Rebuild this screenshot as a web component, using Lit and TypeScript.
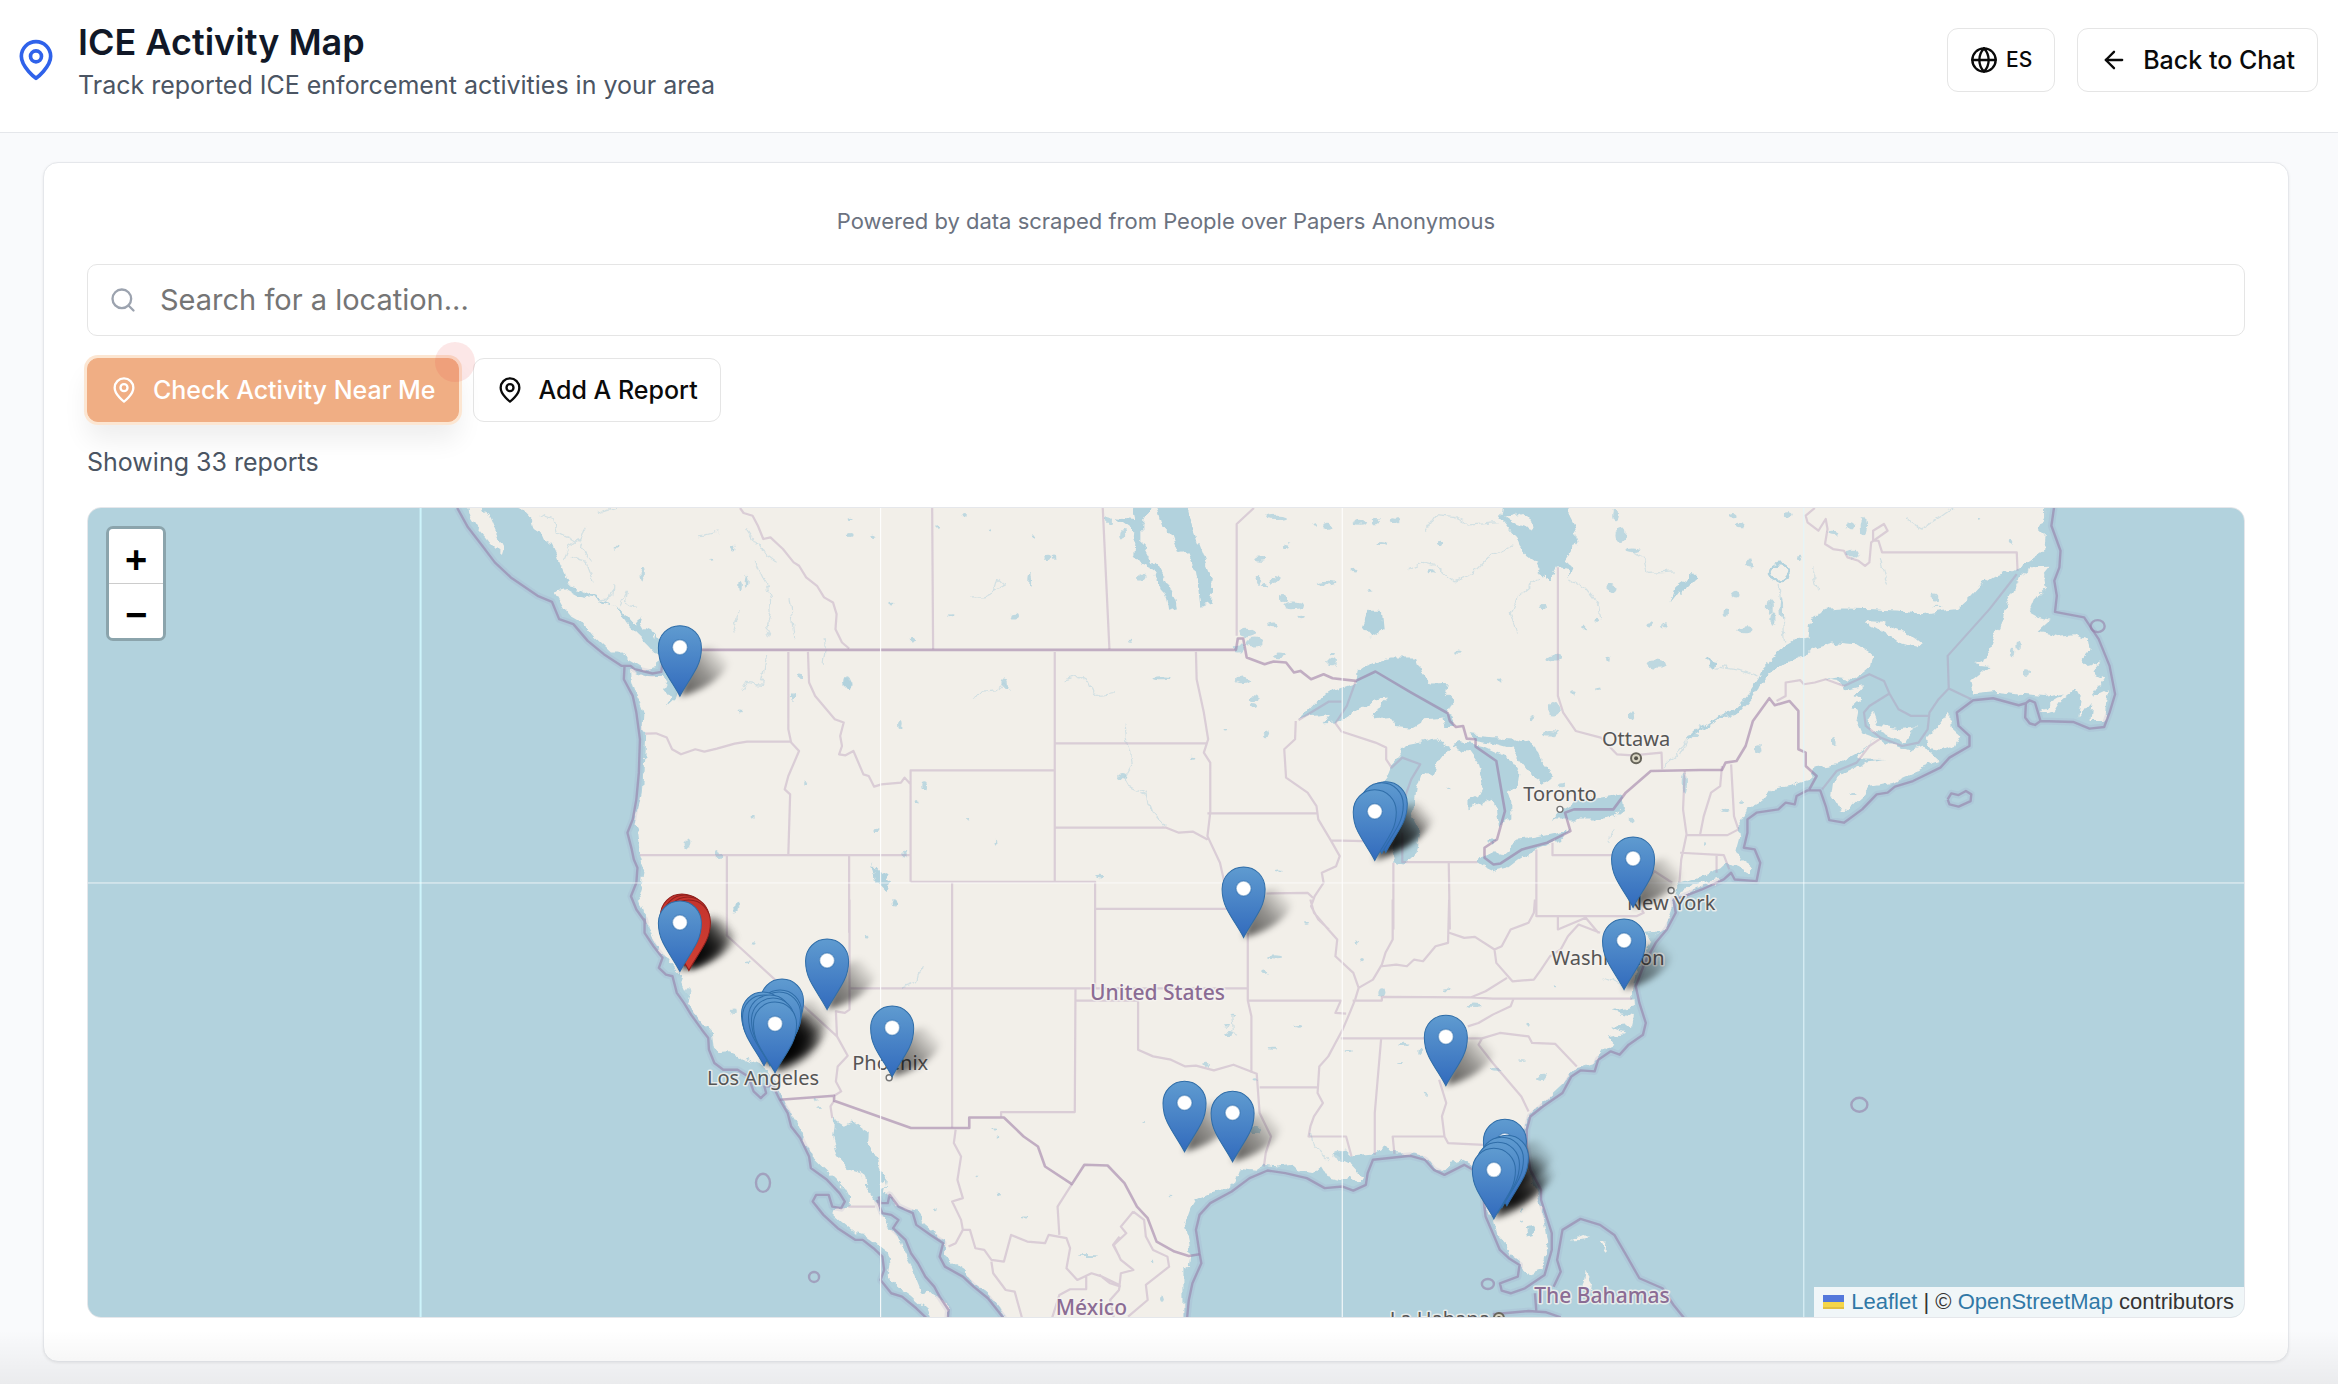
import { LitElement, html, css, svg } from "lit";
import { customElement, property, state } from "lit/decorators.js";

/* ---------- map geometry ---------- */

/* Survey sheets: origin on the map and units per map pixel. */
const SHEETS: Record<string, [number, number, number, number]> = {
  W: [80, 500, 2.8, 3],
  A: [600, 500, 2.8, 3],
  B: [1140, 500, 2.8, 3],
  C: [1680, 500, 2.751, 3],
  D: [560, 900, 2.8, 3],
  E: [1100, 900, 2.8, 3],
  F: [1640, 900, 2.246, 3],
};

/* "A 1 2 3 4 B 5 6" -> path data; a letter switches the sheet. */
function trace(data: string, close = false): string {
  let sheet = SHEETS.A;
  const out: string[] = [];
  let pending: number | null = null;
  for (const token of data.trim().split(/[\s,]+/)) {
    if (SHEETS[token]) {
      sheet = SHEETS[token];
    } else if (pending === null) {
      pending = Number(token);
    } else {
      const x = sheet[0] + pending / sheet[2];
      const y = sheet[1] + Number(token) / sheet[3];
      out.push(`${x.toFixed(1)} ${y.toFixed(1)}`);
      pending = null;
    }
  }
  return `M${out.join("L")}${close ? "Z" : ""}`;
}

const traceAll = (lines: string[], close = false) => lines.map((l) => trace(l, close)).join("");

const SEA = [
  "W 0 0 1220 0 1235 27 1270 65 1275 85 1290 95 1300 120 1325 130 1340 165 1348 190 1355 205 1362 235 1370 262 1400 270 1440 290 1480 308 1520 335 1540 370 1568 400 A 105 360 110 345 118 370 130 392 160 402 180 430 210 440 200 520 222 575 215 600 190 625 200 600 182 575 195 545 170 530 140 530 110 520 90 508 92 545 105 590 118 620 125 640 122 690 130 700 128 760 125 820 120 880 108 940 100 980 105 1000 110 1050 118 1090 125 1110 120 1160 112 1190 125 1230 138 1270 140 1290 D 240 60 255 90 270 130 290 160 310 190 330 215 345 230 340 245 350 270 365 290 360 310 380 340 400 370 425 395 430 440 450 460 480 458 520 475 560 495 590 520 610 550 620 575 630 605 645 630 665 665 680 700 695 735 712 775 740 805 775 840 800 870 812 895 810 920 780 925 765 940 790 965 830 1000 860 1005 890 1030 920 1055 925 1090 920 1130 950 1160 990 1190 1030 1230 1045 1270 W 0 2500",
  "D 770 655 800 675 820 665 845 685 870 700 868 735 885 770 900 810 920 840 915 880 940 905 970 930 1010 935 1015 965 1045 990 1050 1010 1080 1020 1080 1065 1100 1085 1135 1110 1160 1145 1200 1180 1230 1220 1260 1270 1095 1270 1090 1225 1060 1190 1035 1175 1015 1180 1000 1140 985 1100 965 1060 950 1015 925 980 900 940 880 900 860 860 840 820 810 810 780 770 765 710",
  "E 235 1270 235 1110 250 1100 255 1060 250 1020 240 970 255 925 270 900 310 880 350 870 380 845 395 805 440 810 460 795 500 800 540 795 560 815 600 820 620 800 640 835 680 845 700 830 720 855 735 830 700 790 650 765 690 755 705 770 760 765 795 740 810 760 860 762 900 770 925 785 940 810 965 815 985 790 1020 780 1045 795 1060 830 1075 870 1080 930 1100 960 1110 1000 1135 1030 1150 1065 1175 1085 1185 1115 1210 1120 1235 1110 1248 1080 1255 1030 1250 990 1235 920 1215 850 1195 800 1190 760 1185 700 1200 650 1225 620 1260 590 1300 550 1320 520 1350 500 1380 490 1400 460 1440 430 1425 410 1470 400 1425 382 1490 375 1495 350 1435 335 1492 320 1490 280 1500 240 1505 200 1490 160 1520 170 1540 130 1525 100 1568 95 F 30 115 55 90 65 55 75 15 B 1495 1200 1500 1170 C 0 1150 60 1130 110 1110 130 1090 150 1100 165 1105 190 1120 200 1100 170 1080 155 1050 165 1010 160 970 180 935 220 910 250 870 300 860 350 845 365 830 372 805 430 795 480 765 520 735 545 718 500 700 485 660 490 630 465 628 495 600 482 590 505 560 450 573 440 545 400 540 440 535 480 540 520 505 525 465 480 435 430 430 380 445 340 465 290 490 250 520 220 555 190 600 160 640 120 655 90 670 40 705 20 725 35 700 85 665 150 630 190 580 220 530 240 485 280 445 320 420 350 415 355 375 375 345 400 332 450 328 530 330 600 335 665 345 720 335 760 330 800 290 825 260 860 235 920 215 960 185 1000 155 1005 110 985 90 1000 60 1000 27 1000 0 1600 0 1600 2600 0 2600",
  "B 1020 0 1010 60 1050 115 1060 145 1085 175 1105 190 1120 225 1150 245 1170 205 1200 210 1203 235 1210 205 1190 190 1225 130 1215 80 1200 50 1200 0",
];

const LAKES = [
  "B 445 662 490 610 540 575 605 550 610 520 650 490 700 475 775 475 790 520 815 550 860 548 855 580 878 605 865 640 885 680 855 680 850 655 800 660 760 685 720 680 700 650 655 655 670 620 695 597 650 605 590 645 560 665 515 670 530 645 480 650",
  "B 870 745 830 720 790 730 740 740 725 780 700 810 685 850 725 880 720 1000 705 1060 710 1090 740 1095 775 1060 785 1000 765 940 775 870 790 820 822 830 830 800 850 770",
  "B 870 735 920 755 950 800 965 860 950 890 920 905 920 930 960 910 985 895 1000 930 1005 980 1040 960 1040 910 1030 880 1060 860 1065 820 1040 780 1010 765 960 740 900 728",
  "B 920 705 1000 712 1050 715 1100 735 1120 785 1155 830 1130 850 1090 820 1060 780 1040 750 990 735 940 725",
  "B 975 1020 1000 1020 985 1042",
  "B 945 1090 965 1065 1010 1065 1060 1020 1110 1015 1200 995 1180 1020 1110 1050 1060 1080 1030 1105 990 1115 960 1100",
  "B 1150 960 1180 930 1220 905 1290 895 1350 885 1355 930 1330 950 1280 960 1200 960",
  "B 40 0 130 0 150 90 185 190 205 240 200 310 170 320 165 270 155 200 140 160 110 165 90 110 65 80 55 40",
  "A 1490 10 1550 10 1520 70 1520 130 1550 190 B 20 170 50 200 70 240 100 300 105 330 80 338 75 300 55 250 20 190 A 1515 200 1495 170 1500 100 1440 55 1500 60",
  "B 640 335 675 335 680 390 650 412 625 380",
  "A 765 1095 790 1125 815 1118 800 1140 820 1155 800 1172 775 1145",
  "E 1195 985 1215 980 1215 1005 1200 1010",
  "A 690 540 700 545 700 570 688 565",
  "C 0 270 30 225 45 235 0 285",
  "B 1485 310 1500 260 1550 225 1555 240 1510 275",
  "D 450 470 500 465 520 485 470 500",
  "C 68 480 100 485 95 505 80 505",
  "A 160 405 100 410 60 350 75 345 100 375 150 400 165 440 155 440",
];

const ISLANDS = [
  "W 1085 15 1130 15 1150 60 1165 100 1190 150 1185 168 1150 130 1115 85 1095 50",
  "W 1335 280 1365 270 1400 290 1450 300 1500 320 1520 350 1545 385 1568 410 A 140 440 165 470 160 500 130 510 100 490 80 478 60 460 W 1490 460 1440 410 1410 370 1370 345",
  "C 505 365 545 368 600 390 640 410 668 435 650 445 600 430 560 400",
  "C 515 660 530 635 545 680 600 690 650 685 630 700 615 728 580 715 530 690",
  "C 545 718 590 740 630 755 670 740 690 765 710 785 670 800 640 820 590 845 550 855 520 860 500 890 470 920 445 940 430 915 415 890 420 850 450 820 510 790 570 782 480 780 500 755 520 735",
  "C 740 635 740 680 770 710 755 740 720 755 690 750 680 715 710 680",
  "C 1020 203 1000 230 1005 265 975 300 960 340 985 355 1015 365 985 395 1010 400 1040 410 1080 405 1120 420 1125 450 1100 480 1120 500 1155 490 1130 520 1165 540 1135 590 1175 570 1165 665 1125 665 1130 610 1095 655 1100 600 1085 570 1050 600 1030 635 990 645 1020 605 1060 580 1000 590 950 585 870 575 805 583 797 550 830 520 850 500 805 495 840 480 865 405 880 390 900 310 935 230 965 205",
  "C 0 1170 60 1150 110 1135 120 1140 60 1160 0 1187",
  "B 1020 50 1060 38 1095 65 1100 92 1060 78",
  "D 838 812 855 825 865 850 850 845",
  "D 900 845 915 835 918 858 905 865",
  "E 1350 1165 1360 1115 1380 1150 1378 1170",
  "E 1320 1022 1350 1008 1378 1015 1345 1020",
  "E 1400 1025 1418 1020 1415 1062 1408 1060 1412 1035",
];

/* Small lakes: sheet, then x y half-width half-height quadruples. */
const PONDS: Record<string, number[]> = {
  A: [700, 58, 6, 5, 703, 108, 7, 6, 768, 112, 7, 5, 950, 87, 6, 5, 1023, 53, 6, 5, 1095, 93, 4, 4, 1220, 111, 4, 5, 1257, 175, 8, 8, 1273, 171, 7, 5, 1160, 348, 12, 7, 985, 348, 8, 3, 821, 315, 6, 4, 878, 420, 6, 7, 377, 148, 5, 6, 316, 176, 8, 3, 54, 143, 7, 3, 120, 225, 6, 20, 395, 260, 5, 14, 412, 250, 4, 20, 565, 530, 9, 13, 695, 553, 9, 16, 842, 680, 5, 12, 910, 862, 8, 10, 893, 907, 4, 5, 1037, 955, 4, 5, 1108, 1030, 4, 9, 584, 848, 4, 6, 775, 990, 7, 8, 430, 955, 6, 5, 248, 1032, 8, 12, 336, 1068, 6, 10, 855, 1067, 6, 10, 383, 1225, 7, 14, 827, 1213, 8, 14, 1135, 555, 9, 14, 1487, 428, 7, 3, 397, 634, 6, 3, 1465, 832, 10, 8, 1400, 1130, 9, 4, 1428, 66, 7, 8, 1465, 110, 7, 14, 1520, 235, 9, 14, 1205, 245, 4, 20, 543, 590, 3, 12],
  B: [385, 52, 28, 8, 525, 82, 14, 8, 490, 72, 6, 5, 615, 68, 16, 6, 660, 68, 10, 8, 715, 65, 12, 10, 842, 130, 7, 8, 680, 138, 18, 6, 412, 138, 11, 6, 335, 180, 14, 8, 378, 240, 11, 9, 350, 258, 10, 6, 525, 255, 26, 7, 330, 245, 8, 16, 600, 210, 10, 4, 650, 275, 8, 3, 430, 320, 30, 10, 400, 300, 10, 12, 300, 400, 26, 14, 320, 430, 22, 12, 280, 445, 16, 12, 375, 380, 18, 7, 455, 358, 10, 5, 540, 490, 12, 8, 540, 465, 10, 5, 390, 470, 20, 7, 287, 542, 20, 10, 318, 600, 12, 9, 316, 620, 10, 6, 358, 702, 10, 9, 62, 540, 24, 6, 820, 215, 6, 5, 1128, 322, 6, 8, 1160, 475, 22, 9, 1445, 495, 30, 14, 1320, 270, 14, 12, 1380, 152, 18, 7, 1345, 105, 14, 24, 1330, 45, 8, 16, 1425, 380, 10, 8, 1470, 375, 8, 6, 1380, 650, 9, 10, 1150, 702, 22, 7, 1215, 578, 8, 5, 1160, 630, 18, 16, 1375, 965, 10, 4, 1310, 480, 5, 10, 1275, 365, 8, 6, 1245, 390, 7, 4, 1180, 858, 10, 9, 1098, 658, 6, 5, 1285, 570, 8, 5, 1525, 850, 6, 30, 1010, 542, 5, 5, 870, 870, 6, 5, 888, 462, 8, 5, 142, 775, 6, 3, 243, 688, 5, 3, 388, 1113, 12, 3, 1550, 710, 16, 7],
  C: [143, 47, 12, 8, 162, 75, 9, 10, 190, 190, 9, 12, 155, 288, 14, 10, 128, 345, 6, 14, 180, 390, 22, 12, 245, 320, 7, 24, 255, 360, 7, 20, 278, 330, 5, 30, 330, 175, 8, 8, 300, 45, 12, 8, 420, 100, 14, 8, 465, 85, 12, 12, 505, 80, 9, 26, 475, 165, 18, 10, 700, 295, 9, 12, 710, 322, 14, 2, 217, 750, 9, 12, 122, 930, 8, 5, 168, 910, 6, 4, 422, 728, 5, 12, 475, 882, 6, 5, 955, 520, 9, 10, 930, 440, 6, 16, 912, 460, 6, 14, 910, 130, 5, 4, 820, 55, 5, 4, 70, 1032, 4, 7],
  D: [545, 132, 5, 4, 528, 187, 6, 4, 488, 335, 10, 5, 865, 113, 7, 4, 940, 12, 7, 10, 497, 25, 8, 12, 720, 605, 5, 4, 727, 625, 7, 3, 1217, 692, 7, 3, 1228, 710, 5, 3, 1168, 828, 5, 4, 1230, 883, 6, 4, 1300, 953, 8, 3, 1480, 1068, 26, 3, 1052, 930, 5, 4, 360, 280, 8, 14],
  E: [360, 400, 14, 6, 355, 380, 10, 4, 488, 447, 9, 3, 555, 377, 12, 4, 465, 218, 7, 5, 490, 172, 24, 5, 722, 131, 6, 5, 740, 180, 5, 5, 578, 69, 8, 4, 1175, 487, 10, 2, 1238, 533, 16, 8, 1108, 510, 16, 6, 913, 580, 6, 5, 845, 490, 10, 3, 700, 457, 9, 3, 850, 437, 18, 5, 897, 455, 8, 8, 790, 280, 10, 14, 1045, 320, 18, 5, 1275, 260, 5, 3, 972, 272, 12, 3, 1200, 378, 3, 9, 437, 545, 9, 3, 435, 692, 12, 8, 300, 495, 9, 6, 175, 1198, 5, 8, 670, 770, 18, 14, 1180, 930, 5, 5, 1180, 965, 5, 3, 375, 345, 4, 3, 124, 670, 4, 3, 203, 887, 7, 2, 146, 1083, 5, 4],
};

const RIVERS = [
  "A 1045 293 1080 293 1105 280 1115 240 1135 260 1100 280",
  "A 1300 542 1340 532 1370 550 1380 575 1400 585 1440 580",
  "A 1472 670 1475 720 1485 760 1490 800 1470 840 1480 860 1530 885 1540 930 1568 965",
  "A 1050 595 1060 580 1110 575 1135 555 1148 582",
  "A 400 575 415 550 455 555 465 510 472 470",
  "A 410 85 450 150 500 190",
  "A 440 190 460 240 480 290 482 340 468 390 480 415",
  "A 532 300 538 350 548 420",
  "A 392 330 388 370 375 380 382 400",
  "A 275 110 300 108 335 98",
  "A 0 300 30 295 40 255",
  "A 60 320 80 275 75 310 90 320 110 325",
  "A 630 420 635 450 630 500",
  "A 0 40 60 20",
  "B 0 885 20 895 35 940 75 980",
  "B 750 210 790 190 830 200 880 248 930 225 970 180 1040 140",
  "B 800 100 830 50 880 55 920 75 1000 68",
  "B 1115 240 1060 290 1040 340 1060 400",
  "B 1205 240 1250 270 1285 320 1290 360",
  "B 1380 160 1410 180 1420 220 1500 215",
  "B 1465 800 1500 770 1530 720 1568 680",
  "B 1315 1030 1325 990",
  "C 100 500 160 510 215 530",
  "C 272 255 275 300 285 380 290 430",
  "C 240 300 255 350 260 380",
  "C 0 770 20 725",
  "C 370 200 370 240 380 275",
  "C 550 180 560 225 570 250",
  "C 620 60 660 90 720 50 750 27",
  "D 1020 200 1005 225 1000 250 960 265",
  "E 370 345 375 400 390 410",
  "E 590 700 600 740 640 780",
  "E 1410 235 1465 260",
  "W 1418 80 1405 120 1375 140 1360 180",
  "W 1380 180 1420 190 1440 245",
  "W 1460 310 1495 290 1498 255",
  "W 1290 45 1330 60 1340 100 1400 130 1435 185",
];

const STATE_LINES = [
  "A 530 458 530 690 538 730 560 755 530 830 520 870 535 885 530 1065",
  "A 130 703 160 702 190 715 205 750 230 765 270 750 295 757 330 748 380 733 415 727 538 727",
  "A 585 458 588 550 605 590 660 660 685 670 675 710 680 740 672 765 690 768 712 755 740 825 755 830 770 862 790 855 845 850 855 835 872 855",
  "A 872 1147 872 813 1275 813",
  "A 872 1147 1388 1147 1388 1290",
  "A 115 1067 872 1067",
  "A 358 1067 358 1300",
  "A 700 1067 700 1300",
  "A 988 1150 988 1300",
  "A 1275 458 1275 1147",
  "A 1388 1228 1568 1228",
  "A 1275 732 1568 732",
  "A 1275 985 1568 985",
  "A 932 0 935 450",
  "A 1408 0 1428 450",
  "A 395 27 405 42 430 50 445 80 460 120 480 115 515 150 545 190 560 200 580 235 610 260 630 295 655 310 665 345 662 390 680 430 700 448",
  "B 0 732 190 732",
  "B 158 458 160 540 180 640 192 720 180 760 198 790 198 940 190 1010 225 1090 240 1160",
  "B 0 985 75 985 110 1000 150 997 190 1020",
  "B 190 942 497 942",
  "B 437 665 435 720 405 750 410 835 470 880 495 920 500 960 535 1023 628 1025",
  "B 535 1023 560 1070 550 1100 510 1120 515 1150 490 1190 480 1220 500 1260 530 1290",
  "B 355 1182 470 1180 485 1195",
  "B 0 1228 240 1228",
  "B 445 662 530 607 565 607",
  "B 605 545 580 620 548 672 565 697 660 730 690 745 690 780 705 805 735 775 785 795 760 840 740 900",
  "B 710 1090 710 1290",
  "B 865 1090 868 1290",
  "B 735 1000 735 1088 945 1088",
  "B 272 410 272 75 320 27",
  "B 1170 205 1170 590 1185 640 1220 695 1290 715 1335 765 1380 768 1460 760 1462 810",
  "B 1110 1050 1110 1250 1390 1250 1410 1240 1385 1200 1440 1115 1490 1150",
  "B 1155 1030 1155 1067 1410 1067",
  "B 1525 815 1520 930 1530 1005 1515 1080 1510 1150",
  "C 20 1007 130 1007 160 990",
  "C 115 800 110 860 85 880 65 950 55 1005",
  "C 140 795 148 950 160 990",
  "C 0 1060 120 1067 135 1110",
  "C 100 1067 100 1120",
  "C 370 27 345 50 350 70 380 95 400 60 405 90 398 135 420 150 450 155 460 175 490 185 508 200 520 190 525 130 570 95 560 75 530 95 530 125 545 125 555 160 925 160 927 215",
  "C 265 605 290 590 290 550 330 543 340 555 370 550 400 540 450 560",
  "D 470 0 470 108 778 410 808 468 780 500 775 545 790 575 770 588",
  "D 813 0 813 330 800 340 775 335 778 410",
  "D 813 266 1500 266 1568 266",
  "D 1100 0 1100 683",
  "D 1500 0 1500 266",
  "D 1500 28 1568 28",
  "D 1445 266 1443 637 1237 637 1237 650",
  "D 1445 303 E 108 303 108 450 150 470 200 480 240 500 270 498 320 512 375 495 440 522 448 640 480 710 465 760 460 800",
  "E 0 28 370 28",
  "E 415 100 415 303 425 350 425 520",
  "E 0 266 415 266",
  "E 415 303 675 303 660 340 690 342",
  "E 448 563 610 563",
  "E 590 0 600 40 640 90 665 120 660 170 710 220 725 265 715 300 700 340 680 390 660 430 640 470 615 500 610 580 625 610 600 650 590 680 585 710 690 710 705 770",
  "E 820 0 820 120 800 160 790 195 765 240 725 265",
  "E 790 200 830 195 860 200 880 180 905 185 940 140 975 130 978 0",
  "E 978 100 1020 115 1050 112 1105 150 1125 140 1150 90 1200 70 1215 40 1218 0",
  "E 1105 150 1110 190 1155 245 1215 240 1235 210 1260 170 1290 150 1310 110 1340 75 1400 100",
  "E 1282 50 1282 90 1360 55 1395 100",
  "E 1140 235 1080 275 1040 293",
  "E 708 303 790 303 790 292 1040 293 1100 297 1490 297",
  "E 1158 297 1150 320 1100 345 1060 370 1030 380",
  "E 675 416 910 416",
  "E 1030 416 1070 416 1120 400 1200 410 1210 430 1275 433 1335 500",
  "E 788 416 770 640 770 765",
  "E 950 540 970 610 958 650 965 710 820 710 825 762",
  "E 965 710 975 730 1075 735",
  "E 1070 416 1060 435 1100 490 1140 540 1180 590 1200 635",
  "D 1110 690 1105 730 1125 770 1115 840 1130 895 1100 905 1125 960 1130 990 1110 1030 1090 1040",
  "D 1130 990 1150 990 1165 1045 1190 1050 1210 1080 1245 1085 1265 1005 1310 1025 1360 1030 1370 1005 1420 1015 1430 1045 1420 1105 1450 1140 1490 1120 1520 1130 1568 1155",
  "D 1435 853 1395 920 1400 1005",
  "D 1210 1085 1215 1120 1250 1170 1275 1175 1295 1252",
  "D 1380 1252 1400 1185 1430 1168 1475 1168 1475 1130",
  "D 1568 1010 1550 1035 1568 1070",
  "D 770 603 760 620 765 655",
  "D 810 920 885 920",
  "E 95 935 60 980 75 1000 40 1035 60 1080 95 1110 60 1120 55 1170 30 1200 40 1252",
  "E 95 935 125 960 130 1010 150 1050 190 1070 195 1100 130 1155 135 1200 80 1250",
  "E 0 1125 30 1150 60 1160",
];

const SEA_LINES = [
  "C 925 225 900 260 850 330 735 470 738 568 800 600",
  "C 738 568 710 600 685 640 680 690 655 730 610 740 550 715 510 680 505 640 520 620 575 583",
  "C 450 560 520 525 560 545 575 583 600 630 635 650 685 650",
  "C 390 870 430 815 485 790 520 740 550 718",
];

const NATIONAL = [
  "A 200 452 1568 452 B 270 452 275 418 290 418 300 475 350 495 375 487 410 490 432 520 450 515 480 540 515 525 540 537 605 545 660 517 760 580 862 642 868 665 885 683 905 680 915 718 940 720 940 742 998 785 1022 935 1000 1020 965 1045 965 1075 990 1095 1010 1092 1070 1050 1140 1030 1205 995 1190 940 1215 930 1325 930 1360 880 1430 815 1568 812 C 115 812 125 790 155 785 180 740 200 665 245 597 260 618 300 605 325 635 325 750 345 760 345 800 375 830 355 870",
  "D 618 600 770 588 770 603 985 685 1148 685 1148 653 1245 653 1300 710 1340 740 1360 800 1435 853 1470 795 1535 797 E 70 850 105 920 135 955 160 1025 210 1055 250 1068 280 1063",
];

const MARITIME = [
  "W 1060 27 1090 85 1130 140 1165 190 1210 235 1285 290 1325 308 1345 360 1385 375 1425 425 1470 465 1520 500 1545 500 A 100 510 150 523 175 518 180 470",
  "A 72 500 70 540 95 590 105 640 115 720 112 820 105 900 95 960 80 1000 92 1050 98 1080 108 1105 105 1150 90 1190 105 1230 125 1260 130 1270 D 240 60 240 100 265 140 290 175 280 205 300 225 318 230 330 280 350 310 370 345 400 390 418 415 420 450 435 490 460 510 500 510 530 530 545 575 565 595 580 580 575 560 600 560 618 600 640 640 650 680 675 715 700 770 705 805 750 840 785 880 800 905 790 925 765 920 755 885 720 885 710 905 740 945 780 985 830 1020 850 1020 880 1045 905 1070 910 1110 900 1140 930 1180 960 1190 1000 1225 1030 1256",
  "D 895 890 900 910 920 910 925 885 950 920 990 940 1000 975 1040 1005 1075 1030 1065 1070 1080 1100 1130 1130 1160 1160 1200 1195 1230 1235 1245 1256",
  "D 890 900 905 940 930 945 950 960 935 985 970 1020 985 1060 1005 1090 1025 1130 1050 1160 1065 1190 1090 1230 1088 1256",
  "E 245 1256 250 1200 260 1150 285 1090 280 1060 270 990 280 945 310 910 370 875 420 835 470 812 520 820 580 835 630 865 680 860 710 872 745 855 750 820 765 780 870 768 910 780 935 810 965 825 1020 795 1045 810 1070 860 1080 950 1100 1000 1120 1050 1145 1075 1175 1095 1170 1130 1120 1150 1125 1172 1150 1180 1190 1165 1245 1125 1265 1050 1265 1000 1235 900 1235 870 1205 810 1195 740 1195 690 1205 650 1240 620 1295 580 1320 530 1345 512 1385 515 1395 480 1430 455 1455 465 1480 435 1520 405 1528 370 1510 310 1500 260 1525 190 F 35 130 60 90 80 40 75 0 C 0 1195 60 1170 120 1140 140 1120 150 1140 210 1145 220 1090 205 1050 175 1045 185 1000 185 960 210 940 270 930 290 910 315 915 320 890 350 873 385 873 400 920 410 962 450 970 500 930 540 885 570 880 590 862 640 845 715 805 740 775 795 740 795 710 765 680 760 640 805 603 860 597 930 618 950 612 960 603 975 610 990 665 1080 668 1125 688 1165 683 1180 640 1195 585 1180 500 1150 420 1110 355 1030 338 1035 290 1028 245 1042 205 1045 155 1020 80 1028 20",
  "C 950 612 948 655 960 672 975 677 990 665",
  "C 735 900 745 882 765 887 785 875 800 885 798 905 765 922 740 915 735 900",
  "E 1270 1160 1290 1115 1280 1080 1295 990 1345 957 1400 975 1440 1005 1470 1060 1510 1135 F 50 1165 75 1215 100 1256",
  "E 1100 1243 1200 1233 1250 1237 1290 1252",
  "E 1218 1180 1222 1235",
];

const RINGS = [
  [2097, 627, 7, 6],
  [764, 1183, 7, 9],
  [815, 1277, 5, 5],
  [1488, 1284, 6, 5],
  [1859, 1105, 8, 7],
];

const SEAMS = [
  [421, 2, "#cdf4fb"],
  [881, 1, "#ffffff"],
  [1342, 1, "#ffffff"],
  [1803, 1, "#e2f6fb"],
] as const;

interface Place {
  name: string;
  x: number;
  y: number;
  country?: boolean;
  dot?: [number, number];
  capital?: boolean;
}

const PLACES: Place[] = [
  { name: "Ottawa", x: 1636, y: 747, dot: [1636, 759], capital: true },
  { name: "Toronto", x: 1560, y: 802, dot: [1560, 810] },
  { name: "New York", x: 1671, y: 911, dot: [1671, 891] },
  { name: "Washington", x: 1608, y: 965 },
  { name: "Los Angeles", x: 764, y: 1085 },
  { name: "Phoenix", x: 891, y: 1070, dot: [890, 1078] },
  { name: "United States", x: 1158, y: 1000, country: true },
  { name: "México", x: 1092, y: 1315, country: true },
  { name: "The Bahamas", x: 1602, y: 1303, country: true },
  { name: "La Habana", x: 1440, y: 1326, dot: [1499, 1318], capital: true },
];

interface Report {
  x: number;
  y: number;
  recent?: boolean;
}

const REPORTS: Report[] = [
  { x: 681, y: 697 },
  { x: 1386, y: 853 },
  { x: 1382, y: 854 },
  { x: 1375, y: 861 },
  { x: 1633, y: 908 },
  { x: 1244, y: 938 },
  { x: 683, y: 965, recent: true },
  { x: 686, y: 966, recent: true },
  { x: 689, y: 968, recent: true },
  { x: 690, y: 971, recent: true },
  { x: 681, y: 972 },
  { x: 1624, y: 990 },
  { x: 828, y: 1010 },
  { x: 783, y: 1050 },
  { x: 781, y: 1061 },
  { x: 780, y: 1063 },
  { x: 764, y: 1063 },
  { x: 765, y: 1066 },
  { x: 771, y: 1066 },
  { x: 774, y: 1069 },
  { x: 776, y: 1073 },
  { x: 893, y: 1077 },
  { x: 1446, y: 1086 },
  { x: 1185, y: 1152 },
  { x: 1233, y: 1162 },
  { x: 1505, y: 1190 },
  { x: 1507, y: 1206 },
  { x: 1502, y: 1208 },
  { x: 1498, y: 1213 },
  { x: 1494, y: 1219 },
];

const ponds = Object.entries(PONDS).flatMap(([key, list]) => {
  const [ox, oy, sx, sy] = SHEETS[key];
  const out: number[][] = [];
  for (let i = 0; i < list.length; i += 4) {
    out.push([ox + list[i] / sx, oy + list[i + 1] / sy, list[i + 2] / sx, list[i + 3] / sy]);
  }
  return out;
});

/* ---------- icons ---------- */

const mapPin = svg`<path d="M20 10c0 6-8 12-8 12s-8-6-8-12a8 8 0 0 1 16 0Z"/><circle cx="12" cy="10" r="3"/>`;
const globe = svg`<circle cx="12" cy="12" r="10"/><path d="M12 2a14.5 14.5 0 0 0 0 20 14.5 14.5 0 0 0 0-20"/><path d="M2 12h20"/>`;
const arrowLeft = svg`<path d="m12 19-7-7 7-7"/><path d="M19 12H5"/>`;
const search = svg`<circle cx="11" cy="11" r="8"/><path d="m21 21-4.3-4.3"/>`;

const icon = (shape: unknown, cls = "") =>
  html`<svg class="icon ${cls}" viewBox="0 0 24 24" aria-hidden="true">${shape}</svg>`;

/* ---------- map ---------- */

@customElement("activity-map")
export class ActivityMap extends LitElement {
  @property({ attribute: false }) reports: Report[] = [];

  static styles = css`
    :host {
      display: block;
      position: relative;
      overflow: hidden;
      border: 1px solid #e5e7eb;
      border-radius: 14px;
      background: #f2efe9;
      box-sizing: border-box;
    }
    .canvas {
      position: absolute;
      inset: 0;
      width: 100%;
      height: 100%;
      display: block;
    }
    .water {
      fill: #b2d2dd;
    }
    .land {
      fill: #f2efe9;
    }
    .river {
      fill: none;
      stroke: #b2d2dd;
      stroke-width: 1.2;
      opacity: 0.5;
    }
    .line {
      fill: none;
      stroke-linejoin: round;
    }
    .state-line {
      stroke: #b08fb5;
      stroke-width: 2.2;
      opacity: 0.36;
    }
    .national {
      stroke: #94719f;
      stroke-width: 2.6;
      opacity: 0.52;
    }
    .zone {
      stroke: #9a9cc4;
      stroke-width: 7;
      opacity: 0.16;
    }
    .maritime {
      stroke: #947ba6;
      stroke-width: 2.4;
      opacity: 0.56;
    }
    .place {
      font: 400 20px "Noto Sans", sans-serif;
      text-anchor: middle;
      fill: #555;
      stroke: #f6f4f0;
      stroke-width: 3;
      stroke-opacity: 0.8;
      stroke-linejoin: round;
      paint-order: stroke;
    }
    .country {
      fill: #8b6c94;
      font-size: 21px;
      font-weight: 500;
    }
    .dot {
      fill: #fff;
      stroke: #777;
      stroke-width: 1.4;
    }
    .capital {
      fill: #d9d5c3;
      stroke: #66645a;
      stroke-width: 2;
    }
    .zoom {
      position: absolute;
      left: 18px;
      top: 18px;
      width: 60px;
      box-sizing: border-box;
      border: 3px solid rgba(0, 0, 0, 0.22);
      border-radius: 7px;
      background-clip: padding-box;
      display: flex;
      flex-direction: column;
      overflow: hidden;
    }
    .zoom button {
      box-sizing: border-box;
      height: 54px;
      padding: 8px 0 0;
      border: 0;
      background: #fff;
      color: #000;
      font: 700 38px/46px "Liberation Sans", Arial, sans-serif;
    }
    .zoom button + button {
      height: 55px;
      border-top: 1px solid #ccc;
    }
    .credit {
      position: absolute;
      right: 0;
      bottom: 0;
      display: flex;
      align-items: center;
      gap: 7px;
      height: 30px;
      padding: 0 10px 0 9px;
      background: rgba(255, 255, 255, 0.8);
      color: #333;
      font: 400 22px/30px "Liberation Sans", Arial, sans-serif;
      white-space: pre;
    }
    .credit a {
      color: #3078a6;
      text-decoration: none;
    }
    .flag {
      width: 21px;
      height: 14px;
    }
  `;

  private marker(r: Report) {
    const fill = r.recent ? "url(#pin-red)" : "url(#pin-blue)";
    const edge = r.recent ? "#8f201d" : "#2f6da8";
    return svg`<g transform="translate(${r.x} ${r.y})">
      <path d="M0 0C-4-8-12-19-17-29-20-35-21.500-41-21.500-48.500-21.500-61-12-70.500 0-70.500S21.500-61 21.500-48.500C21.500-41 20-35 17-29 12-19 4-8 0 0Z" fill=${fill} stroke=${edge} stroke-width="1"/>
      <circle cx="0" cy="-49" r="7.500" fill="#fff" stroke=${edge} stroke-opacity=".45" stroke-width="1.500"/>
    </g>`;
  }

  render() {
    return html`
      <svg class="canvas" viewBox="88 509 2157 808" preserveAspectRatio="xMidYMid slice" role="img" aria-label="Map of reports">
        <defs>
          <linearGradient id="pin-blue" x1="0" y1="0" x2="0" y2="1">
            <stop offset="0" stop-color="#5f9bd0" />
            <stop offset="1" stop-color="#326bbd" />
          </linearGradient>
          <linearGradient id="pin-red" x1="0" y1="0" x2="0" y2="1">
            <stop offset="0" stop-color="#c5342d" />
            <stop offset="1" stop-color="#cf4034" />
          </linearGradient>
          <linearGradient id="shade" gradientUnits="userSpaceOnUse" x1="0" y1="0" x2="46" y2="-40">
            <stop offset="0" stop-color="#000" stop-opacity=".65" />
            <stop offset=".55" stop-color="#000" stop-opacity=".38" />
            <stop offset="1" stop-color="#000" stop-opacity="0" />
          </linearGradient>
          <filter id="soft" x="-30%" y="-30%" width="160%" height="160%">
            <feGaussianBlur stdDeviation="3" />
          </filter>
          <filter id="rough" x="0" y="0" width="100%" height="100%">
            <feTurbulence type="fractalNoise" baseFrequency="0.09" numOctaves="3" seed="4" />
            <feDisplacementMap in="SourceGraphic" scale="9" xChannelSelector="R" yChannelSelector="G" />
          </filter>
        </defs>

        <g filter="url(#rough)">
          <path class="water" d=${traceAll([...SEA, ...LAKES], true)} />
          <path class="land" d=${traceAll(ISLANDS, true)} />
          <path class="river" d=${traceAll(RIVERS)} />
          ${ponds.map(([x, y, rx, ry]) => svg`<ellipse class="water" cx=${x} cy=${y} rx=${rx} ry=${ry} opacity=".8"/>`)}
          <ellipse cx="1779" cy="574" rx="9" ry="8" fill="none" stroke="#b2d2dd" stroke-width="3" />
        </g>

        <path class="line state-line" d=${traceAll(STATE_LINES)} />
        <path class="line state-line" d=${traceAll(SEA_LINES)} />
        <path class="line national" d=${traceAll(NATIONAL)} />
        <path class="line zone" d=${traceAll(MARITIME)} />
        <path class="line maritime" d=${traceAll(MARITIME)} />
        ${RINGS.map(([x, y, rx, ry]) => svg`<ellipse class="line maritime" cx=${x} cy=${y} rx=${rx} ry=${ry}/>`)}

        ${PLACES.map(
          (p) => svg`
            ${p.dot ? svg`<circle class="dot ${p.capital ? "capital" : ""}" cx=${p.dot[0]} cy=${p.dot[1]} r=${p.capital ? 5 : 3}/>` : ""}
            ${p.dot && p.capital ? svg`<circle cx=${p.dot[0]} cy=${p.dot[1]} r="2" fill="#55534a"/>` : ""}
            <text class="place ${p.country ? "country" : ""}" x=${p.x} y=${p.y}>${p.name}</text>`
        )}

        ${SEAMS.map(([x, w, c]) => svg`<rect x=${x} y="500" width=${w} height="830" fill=${c}/>`)}
        <rect x="80" y="883" width="2180" height="1" fill="#fff" opacity=".75" />

        ${this.reports.map(
          (r) => svg`<path transform="translate(${r.x} ${r.y})" filter="url(#soft)" fill="url(#shade)" d="M0 0L10-34Q24-56 42-48 56-38 42-22 26-6 0 0Z"/>`
        )}
        ${this.reports.map((r) => this.marker(r))}
      </svg>

      <div class="zoom">
        <button type="button" aria-label="Zoom in">+</button>
        <button type="button" aria-label="Zoom out">−</button>
      </div>
      <div class="credit">
        <svg class="flag" viewBox="0 0 21 14" aria-hidden="true">
          <path fill="#5478db" d="M0 0h21v7H0z" />
          <path fill="#f5d649" d="M0 7h21v7H0z" />
          <path fill="#e3bf3f" d="M0 12h21v2H0z" />
        </svg><span><a href="#leaflet">Leaflet</a> | © <a href="#osm">OpenStreetMap</a> contributors</span>
      </div>
    `;
  }
}

/* ---------- page ---------- */

@customElement("app-root")
export class AppRoot extends LitElement {
  @state() private total = 33;

  static styles = css`
    :host {
      display: flex;
      flex-direction: column;
      min-height: 100vh;
      position: relative;
      background: #f9fafc;
      color: #0a0a0a;
      font-family: Inter, sans-serif;
      font-size: 25px;
      line-height: 36px;
    }
    * {
      box-sizing: border-box;
    }
    .icon {
      width: 28px;
      height: 28px;
      flex: none;
      fill: none;
      stroke: currentColor;
      stroke-width: 2;
      stroke-linecap: round;
      stroke-linejoin: round;
    }
    .header {
      display: flex;
      align-items: center;
      justify-content: space-between;
      height: 133px;
      padding: 0 20px 12px 14px;
      background: #fff;
      border-bottom: 1px solid #e5e7eb;
    }
    .brand {
      display: flex;
      align-items: center;
      gap: 20px;
    }
    .brand .icon {
      width: 44px;
      height: 44px;
      color: #2f62ea;
    }
    .names {
      display: flex;
      flex-direction: column;
      gap: 3px;
      padding-top: 3px;
    }
    .title {
      margin: 0;
      font-size: 36px;
      line-height: 44px;
      font-weight: 600;
      color: #111827;
    }
    .subtitle {
      margin: 0;
      color: #4b5563;
    }
    .actions {
      display: flex;
      gap: 22px;
    }
    .btn {
      display: inline-flex;
      align-items: center;
      height: 64px;
      padding: 0 22px;
      gap: 15px;
      border: 1px solid #e5e5e5;
      border-radius: 11px;
      background: #fff;
      color: #0a0a0a;
      font: 500 25px/36px Inter, sans-serif;
      text-decoration: none;
      white-space: nowrap;
    }
    .lang {
      gap: 8px;
      font-size: 21px;
    }
    .main {
      flex: 1;
      display: flex;
      padding: 29px 49px 22px 43px;
    }
    .card {
      flex: 1;
      display: flex;
      flex-direction: column;
      padding: 40px 43px 43px;
      background: #fff;
      border: 1px solid #e5e7eb;
      border-radius: 15px;
      box-shadow: 0 1px 3px rgba(0, 0, 0, 0.08);
    }
    .source {
      margin: 0 0 25px;
      text-align: center;
      font-size: 22px;
      color: #6b7280;
    }
    .search {
      display: flex;
      align-items: center;
      height: 72px;
      padding: 0 21px;
      gap: 23px;
      border: 1px solid #e5e5e5;
      border-radius: 10px;
      color: #9ca3af;
    }
    .search input {
      flex: 1;
      min-width: 0;
      padding: 0;
      border: 0;
      outline: 0;
      background: none;
      color: #0a0a0a;
      font: 400 29px/40px Inter, sans-serif;
    }
    .search input::placeholder {
      color: #757575;
      opacity: 1;
    }
    .tools {
      display: flex;
      gap: 14px;
      margin-top: 22px;
    }
    .near {
      position: relative;
      border-color: #f0ae84;
      background: #f0ae84;
      color: #fff;
      box-shadow: 0 0 0 3px #fce6d2, 0 18px 26px rgba(0, 0, 0, 0.07);
    }
    .ping {
      position: absolute;
      right: -17px;
      top: -17px;
      width: 40px;
      height: 40px;
      border-radius: 50%;
      background: rgba(230, 68, 68, 0.13);
    }
    .count {
      margin: 22px 0 27px;
      color: #4b5563;
    }
    activity-map {
      flex: 1;
      min-height: 400px;
    }
    .fade {
      position: absolute;
      left: 0;
      right: 0;
      bottom: 0;
      height: 54px;
      background: linear-gradient(rgba(0, 0, 0, 0), rgba(0, 0, 0, 0.06));
      pointer-events: none;
    }
  `;

  render() {
    return html`
      <header class="header">
        <div class="brand">
          ${icon(mapPin)}
          <div class="names">
            <h1 class="title">ICE Activity Map</h1>
            <p class="subtitle">Track reported ICE enforcement activities in your area</p>
          </div>
        </div>
        <div class="actions">
          <button class="btn lang" type="button">${icon(globe)}ES</button>
          <a class="btn" href="#chat">${icon(arrowLeft)}Back to Chat</a>
        </div>
      </header>
      <main class="main">
        <section class="card">
          <p class="source">Powered by data scraped from People over Papers Anonymous</p>
          <label class="search">
            ${icon(search)}
            <input type="text" placeholder="Search for a location..." aria-label="Search for a location" />
          </label>
          <div class="tools">
            <button class="btn near" type="button">${icon(mapPin)}Check Activity Near Me<span class="ping"></span></button>
            <button class="btn" type="button">${icon(mapPin)}Add A Report</button>
          </div>
          <p class="count">Showing ${this.total} reports</p>
          <activity-map .reports=${REPORTS}></activity-map>
        </section>
      </main>
      <div class="fade"></div>
    `;
  }
}
